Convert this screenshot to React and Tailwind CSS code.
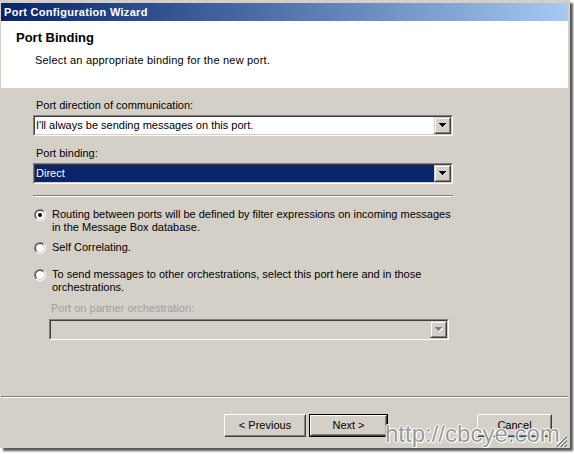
import React from 'react'

function DropButton({ disabled }) {
  const fill = disabled ? '#808080' : '#000000'
  return (
    <div className="w-[17px] h-full shrink-0 border border-t-[#d4d0c8] border-l-[#d4d0c8] border-b-[#404040] border-r-[#404040] bg-[#d4d0c8]">
      <div className="h-full flex items-center justify-center border border-t-white border-l-white border-b-[#808080] border-r-[#808080]">
        <svg width="8" height="5" shapeRendering="crispEdges">
          {disabled && (
            <g fill="#ffffff">
              <rect x="1" y="1" width="7" height="1" />
              <rect x="2" y="2" width="5" height="1" />
              <rect x="3" y="3" width="3" height="1" />
              <rect x="4" y="4" width="1" height="1" />
            </g>
          )}
          <g fill={fill}>
            <rect x="0" y="0" width="7" height="1" />
            <rect x="1" y="1" width="5" height="1" />
            <rect x="2" y="2" width="3" height="1" />
            <rect x="3" y="3" width="1" height="1" />
          </g>
        </svg>
      </div>
    </div>
  )
}

function Combo({ value, selected, disabled, className }) {
  return (
    <div className={`h-[21px] border border-t-[#808080] border-l-[#808080] border-b-white border-r-white ${className}`}>
      <div className={`h-full flex border border-t-[#404040] border-l-[#404040] border-b-[#d4d0c8] border-r-[#d4d0c8] ${disabled ? 'bg-[#d4d0c8]' : 'bg-white'}`}>
        <div className={`flex-1 flex items-center pl-[1px] ${selected ? 'bg-[#0a246a] text-white' : 'text-black'}`}>
          {value}
        </div>
        <DropButton disabled={disabled} />
      </div>
    </div>
  )
}

function Radio({ checked }) {
  return (
    <div className="w-[12px] h-[12px] shrink-0 rounded-full border border-t-[#808080] border-l-[#808080] border-b-white border-r-white">
      <div className="w-full h-full rounded-full bg-white flex items-center justify-center border border-t-[#404040] border-l-[#404040] border-b-[#d4d0c8] border-r-[#d4d0c8]">
        {checked && <div className="w-[4px] h-[4px] rounded-full bg-black" />}
      </div>
    </div>
  )
}

function Button({ children, isDefault, className }) {
  return (
    <div className={`h-[23px] ${isDefault ? 'border border-black' : ''} ${className}`}>
      <div className="h-full border border-t-white border-l-white border-b-[#404040] border-r-[#404040]">
        <div className="h-full flex items-center justify-center border border-t-[#d4d0c8] border-l-[#d4d0c8] border-b-[#808080] border-r-[#808080] text-black">
          {children}
        </div>
      </div>
    </div>
  )
}

function Etched() {
  return (
    <div>
      <div className="h-px bg-[#808080]" />
      <div className="h-px bg-white" />
    </div>
  )
}

export default function App() {
  return (
    <div className="w-[574px] h-[454px] bg-white relative overflow-hidden font-['Liberation_Sans',Arial,sans-serif] text-[11px] leading-[13px]">
      <div className="w-[570px] h-[448px] bg-[#d4d0c8] border-l border-t-[3px] border-r-2 border-[#d4d0c8] flex flex-col shadow-[3px_3px_2px_rgba(0,0,0,0.65)]">
        {/* title bar */}
        <div className="h-[18px] shrink-0 flex items-center pl-[3px] bg-gradient-to-r from-[#0a246a] to-[#a6caf0] text-white font-bold tracking-[0.3px]">
          Port Configuration Wizard
        </div>

        {/* header */}
        <div className="h-[67px] shrink-0 bg-white">
          <div className="pt-[9px] pl-[15px] text-[13px] leading-[16px] font-bold text-black">Port Binding</div>
          <div className="mt-[8px] pl-[34px] text-black tracking-[0.2px]">Select an appropriate binding for the new port.</div>
        </div>

        {/* body */}
        <div className="h-[308px] shrink-0 pl-[32px] text-black">
          <div className="mt-[11px] ml-[3px]">Port direction of communication:</div>
          <Combo className="mt-[3px] w-[420px]" value="I'll always be sending messages on this port." />
          <div className="mt-[11px] ml-[3px]">Port binding:</div>
          <Combo className="mt-[3px] w-[420px]" value="Direct" selected />
          <div className="mt-[11px] w-[420px]">
            <Etched />
          </div>

          <div className="mt-[11px] ml-[1px] flex gap-[6px]">
            <div className="mt-[1px]"><Radio checked /></div>
            <div>
              Routing between ports will be defined by filter expressions on incoming messages<br />
              in the Message Box database.
            </div>
          </div>
          <div className="mt-[7px] ml-[1px] flex gap-[6px]">
            <div className="mt-[1px]"><Radio /></div>
            <div>Self Correlating.</div>
          </div>
          <div className="mt-[14px] ml-[1px] flex gap-[6px]">
            <div className="mt-[1px]"><Radio /></div>
            <div>
              To send messages to other orchestrations, select this port here and in those<br />
              orchestrations.
            </div>
          </div>
          <div className="mt-[8px] ml-[18px] text-[#a0a0a0]">Port on partner orchestration:</div>
          <Combo className="mt-[4px] ml-[16px] w-[400px]" value="" disabled />
        </div>

        <Etched />

        {/* buttons */}
        <div className="mt-[16px] flex">
          <Button className="ml-[223px] w-[82px]">&lt; Previous</Button>
          <Button className="ml-[3px] w-[79px]" isDefault>Next &gt;</Button>
          <Button className="ml-[89px] w-[75px]">Cancel</Button>
        </div>
      </div>

      {/* size grip */}
      <svg className="absolute left-[554px] top-[434px]" width="13" height="13" shapeRendering="crispEdges">
        {[0, 4, 8].map((o) => (
          <g key={o}>
            <line x1={13} y1={o + 1} x2={o + 1} y2={13} stroke="#ffffff" strokeWidth="1" />
            <line x1={13} y1={o + 2} x2={o + 2} y2={13} stroke="#808080" strokeWidth="1" />
            <line x1={13} y1={o + 3} x2={o + 3} y2={13} stroke="#808080" strokeWidth="1" />
          </g>
        ))}
      </svg>

      {/* watermark */}
      <div className="absolute left-[385px] top-[422px] text-[24px] leading-[24px] text-[rgba(120,120,120,0.75)] [text-shadow:1px_0_0_#fff,-1px_0_0_#fff,0_1px_0_#fff,0_-1px_0_#fff,1px_1px_0_#fff]">
        http://cbcye.com
      </div>
    </div>
  )
}
